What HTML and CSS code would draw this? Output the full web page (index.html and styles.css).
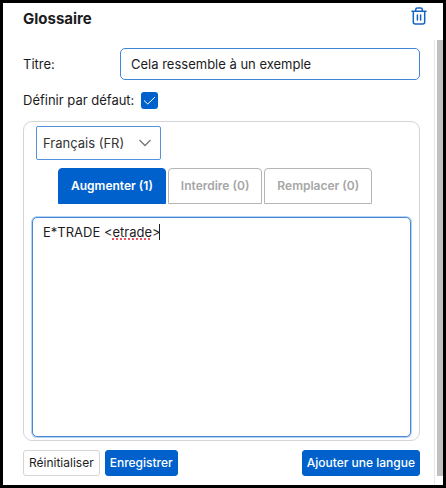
FILE: index.html
```html
<!DOCTYPE html>
<html lang="fr">
<head>
<meta charset="utf-8">
<meta name="viewport" content="width=device-width, initial-scale=1">
<title>Glossaire</title>
<link rel="stylesheet" href="styles.css">
</head>
<body>
<div class="window">
  <header class="header">
    <h1 class="heading">Glossaire</h1>
    <button class="delete" type="button" aria-label="Supprimer">
      <svg width="16" height="18" viewBox="0 0 16 18" fill="none" stroke="currentColor" stroke-width="1.5" stroke-linecap="round" stroke-linejoin="round" aria-hidden="true">
        <path d="M1 4.2h14M4.7 4V2.6Q4.7 1 6.3 1h3.4q1.6 0 1.6 1.6V4M2.3 4.4V15q0 2 2 2h7.4q2 0 2-2V4.4M6.4 8v5M9.6 8v5"/>
      </svg>
    </button>
  </header>
  <div class="scroller">
    <form class="form">
      <div class="title-row">
        <label class="title-label" for="title">Titre:</label>
        <input class="title-input" id="title" type="text" value="Cela ressemble à un exemple">
      </div>
      <div class="default-row">
        <label for="default">Définir par défaut:</label>
        <input class="checkbox" id="default" type="checkbox" checked>
      </div>
      <section class="panel">
        <div class="language">
          <select class="language-select" aria-label="Langue">
            <option>Français (FR)</option>
          </select>
          <svg class="chevron" width="12" height="8" viewBox="0 0 12 8" fill="none" stroke="currentColor" stroke-width="1.3" aria-hidden="true"><path d="M.5 1 6 6.5 11.5 1"/></svg>
        </div>
        <div class="tabs" role="tablist">
          <button class="tab tab-active" type="button" role="tab" aria-selected="true">Augmenter (1)</button>
          <button class="tab" type="button" role="tab" aria-selected="false">Interdire (0)</button>
          <button class="tab" type="button" role="tab" aria-selected="false">Remplacer (0)</button>
        </div>
        <div class="editor">
          <textarea class="terms" aria-label="Termes" spellcheck="false">E*TRADE &lt;etrade&gt;</textarea>
          <span class="misspelling"></span>
          <span class="caret"></span>
        </div>
      </section>
      <div class="actions">
        <button class="button" type="reset">Réinitialiser</button>
        <button class="button button-primary" type="submit">Enregistrer</button>
        <button class="button button-primary button-end" type="button">Ajouter une langue</button>
      </div>
    </form>
    <div class="track"><div class="thumb"></div></div>
  </div>
</div>
</body>
</html>
```
FILE: styles.css
```css
* {
  box-sizing: border-box;
}

body {
  margin: 0;
  background: #000;
  color: #1c1c1e;
  font: 13px/20px Inter, "Liberation Sans", sans-serif;
}

button,
input,
select,
textarea {
  margin: 0;
  font: inherit;
  color: inherit;
}

.window {
  display: flex;
  flex-direction: column;
  min-height: 100vh;
  border: 3px solid #000;
  background: #fff;
}

.header {
  display: flex;
  justify-content: space-between;
  align-items: flex-start;
  height: 37px;
  padding: 4px 13px 0 20px;
}

.heading {
  margin: 0;
  font-size: 15px;
  line-height: 24px;
  font-weight: 700;
}

.delete {
  display: flex;
  padding: 0 3px;
  border: 0;
  background: none;
  color: #1763c0;
}

.scroller {
  display: flex;
  flex: 1;
}

.form {
  display: flex;
  flex: 1;
  flex-direction: column;
  min-width: 0;
  padding: 8px 14px 9px 20px;
}

.title-row {
  display: flex;
  align-items: center;
}

.title-label {
  width: 97px;
}

.title-input {
  flex: 1;
  min-width: 0;
  height: 32px;
  padding: 0 10px;
  border: 1px solid #4186d6;
  border-radius: 5px;
  background: #fff;
}

.default-row {
  display: flex;
  align-items: center;
  gap: 7px;
  margin: 10px 0 11px;
}

.checkbox {
  appearance: none;
  width: 17px;
  height: 17px;
  border-radius: 3px;
  background: #0061cc url("data:image/svg+xml,%3Csvg xmlns='http://www.w3.org/2000/svg' viewBox='0 0 17 17' fill='none' stroke='white' stroke-width='1'%3E%3Cpath d='M3 8.5 6.8 12 14 5'/%3E%3C/svg%3E");
}

.panel {
  display: flex;
  flex: 1;
  flex-direction: column;
  padding: 4px 8px 3px;
  border: 1px solid #d4d5d8;
  border-radius: 9px;
}

.language {
  position: relative;
  width: 125px;
  margin-left: 4px;
}

.language-select {
  appearance: none;
  display: block;
  width: 100%;
  height: 34px;
  padding: 0 6px;
  border: 1px solid #5393dc;
  border-radius: 2px;
  background: #fff;
  color: #333;
}

.chevron {
  position: absolute;
  top: 13px;
  right: 10px;
  color: #777;
  pointer-events: none;
}

.tabs {
  display: flex;
  gap: 2px;
  margin: 8px 0 13px 26px;
}

.tab {
  height: 36px;
  padding: 0 12px;
  border: 1px solid #b5b5b5;
  border-radius: 4px 4px 0 0;
  background: #fff;
  color: #a6a6a6;
  font-size: 12px;
  font-weight: 600;
  white-space: nowrap;
}

.tab-active {
  border-color: #0061cc;
  background: #0061cc;
  color: #fff;
}

.editor {
  position: relative;
  display: flex;
  flex: 1;
}

.terms {
  flex: 1;
  min-width: 0;
  min-height: 120px;
  padding: 4px 10px;
  border: 1px solid #4a86cf;
  border-radius: 5px;
  outline: 0;
  box-shadow: 0 0 0 1px #b4d3f6;
  resize: none;
}

.misspelling {
  position: absolute;
  top: 21px;
  left: 80px;
  width: 38px;
  border-bottom: 2px dotted #e8505b;
}

.caret {
  position: absolute;
  top: 7px;
  left: 127px;
  width: 1px;
  height: 16px;
  background: #222;
}

.actions {
  display: flex;
  gap: 5px;
  margin-top: 9px;
}

.button {
  height: 26px;
  padding: 0 5px;
  border: 1px solid #d4d5d8;
  border-radius: 3px;
  background: #fff;
  font-size: 12px;
  white-space: nowrap;
}

.button-primary {
  padding: 0 4px;
  border-color: #0061cc;
  background: #0061cc;
  color: #fff;
  font-weight: 500;
}

.button-end {
  margin-left: auto;
}

.track {
  width: 9px;
  padding: 0 0 9px 2px;
  border-left: 1px solid #e8e8e8;
}

.thumb {
  height: 100%;
  background: #c1c1c1;
}
```
